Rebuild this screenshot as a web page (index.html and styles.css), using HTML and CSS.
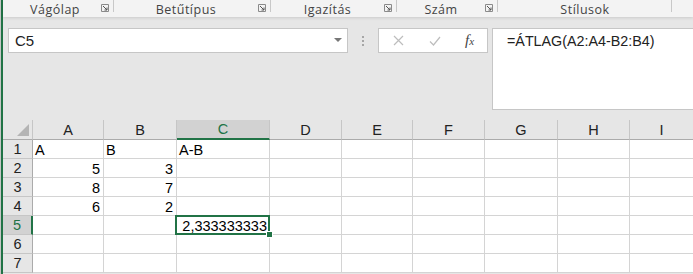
FILE: index.html
```html
<!DOCTYPE html>
<html lang="hu">
<head>
    <meta charset="UTF-8">
    <meta name="viewport" content="width=device-width, initial-scale=1.0">
    <title>Excel - ÁTLAG</title>
    <link rel="stylesheet" href="styles.css">
</head>
<body>
<div class="app">
    <div class="ribbon">
        <div class="group group-clip">
            <span class="group-label">Vágólap</span>
            <svg class="launcher" width="8" height="8" viewBox="0 0 8 8"><path d="M0.5 0.5h7v7h-7z" fill="none" stroke="#8a8a8a"/><path d="M2 2l4 4M3.5 6h2.5v-2.5" fill="none" stroke="#555"/></svg>
        </div>
        <div class="group group-font">
            <span class="group-label">Betűtípus</span>
            <svg class="launcher" width="8" height="8" viewBox="0 0 8 8"><path d="M0.5 0.5h7v7h-7z" fill="none" stroke="#8a8a8a"/><path d="M2 2l4 4M3.5 6h2.5v-2.5" fill="none" stroke="#555"/></svg>
        </div>
        <div class="group group-align">
            <span class="group-label">Igazítás</span>
            <svg class="launcher" width="8" height="8" viewBox="0 0 8 8"><path d="M0.5 0.5h7v7h-7z" fill="none" stroke="#8a8a8a"/><path d="M2 2l4 4M3.5 6h2.5v-2.5" fill="none" stroke="#555"/></svg>
        </div>
        <div class="group group-number">
            <span class="group-label">Szám</span>
            <svg class="launcher" width="8" height="8" viewBox="0 0 8 8"><path d="M0.5 0.5h7v7h-7z" fill="none" stroke="#8a8a8a"/><path d="M2 2l4 4M3.5 6h2.5v-2.5" fill="none" stroke="#555"/></svg>
        </div>
        <div class="group group-styles">
            <span class="group-label">Stílusok</span>
        </div>
        <div class="group group-rest"></div>
    </div>

    <div class="formula-area">
        <div class="name-box">
            <span>C5</span>
            <svg width="8" height="5" viewBox="0 0 8 5"><path d="M0 0h8l-4 4z" fill="#777"/></svg>
        </div>
        <div class="grip">
            <i></i><i></i><i></i>
        </div>
        <div class="fx-buttons">
            <svg width="11" height="11" viewBox="0 0 11 11"><path d="M1 1l9 9M10 1l-9 9" stroke="#bdbdbd" stroke-width="1.2"/></svg>
            <svg width="12" height="10" viewBox="0 0 12 10"><path d="M1 5.5l3.5 3.5l6.5-8" fill="none" stroke="#bdbdbd" stroke-width="1.2"/></svg>
            <span class="fx">f<sub>x</sub></span>
        </div>
        <div class="formula-box">=ÁTLAG(A2:A4-B2:B4)</div>
    </div>

    <div class="sheet">
        <div class="hd corner"><span class="tri"></span></div>
        <div class="hd col">A</div>
        <div class="hd col">B</div>
        <div class="hd col sel-col">C</div>
        <div class="hd col">D</div>
        <div class="hd col">E</div>
        <div class="hd col">F</div>
        <div class="hd col">G</div>
        <div class="hd col">H</div>
        <div class="hd col last">I</div>

        <div class="hd row">1</div>
        <div class="cell">A</div>
        <div class="cell">B</div>
        <div class="cell">A-B</div>
        <div class="cell"></div><div class="cell"></div><div class="cell"></div><div class="cell"></div><div class="cell"></div><div class="cell last"></div>

        <div class="hd row">2</div>
        <div class="cell num">5</div>
        <div class="cell num">3</div>
        <div class="cell"></div><div class="cell"></div><div class="cell"></div><div class="cell"></div><div class="cell"></div><div class="cell"></div><div class="cell last"></div>

        <div class="hd row">3</div>
        <div class="cell num">8</div>
        <div class="cell num">7</div>
        <div class="cell"></div><div class="cell"></div><div class="cell"></div><div class="cell"></div><div class="cell"></div><div class="cell"></div><div class="cell last"></div>

        <div class="hd row">4</div>
        <div class="cell num">6</div>
        <div class="cell num">2</div>
        <div class="cell"></div><div class="cell"></div><div class="cell"></div><div class="cell"></div><div class="cell"></div><div class="cell"></div><div class="cell last"></div>

        <div class="hd row sel-row">5</div>
        <div class="cell"></div>
        <div class="cell"></div>
        <div class="cell num active">2,333333333<span class="handle"></span></div>
        <div class="cell"></div><div class="cell"></div><div class="cell"></div><div class="cell"></div><div class="cell"></div><div class="cell last"></div>

        <div class="hd row">6</div>
        <div class="cell"></div><div class="cell"></div><div class="cell"></div><div class="cell"></div><div class="cell"></div><div class="cell"></div><div class="cell"></div><div class="cell"></div><div class="cell last"></div>

        <div class="hd row">7</div>
        <div class="cell"></div><div class="cell"></div><div class="cell"></div><div class="cell"></div><div class="cell"></div><div class="cell"></div><div class="cell"></div><div class="cell"></div><div class="cell last"></div>
    </div>
</div>
</body>
</html>
```

FILE: styles.css
```css
html, body {
    margin: 0;
    padding: 0;
    height: 274px;
    overflow: hidden;
    background-color: #c6c6c6;
}
.app {
    margin-left: 1px;
    border-left: 2px solid #217346;
    height: 274px;
    background-color: #e6e6e6;
    font-family: "Liberation Sans", Arial, sans-serif;
}

/* ribbon group labels */
.ribbon {
    display: flex;
    height: 17px;
    background-color: #f3f3f3;
    box-shadow: 0 1px 3px rgba(0,0,0,0.12);
    position: relative;
    z-index: 1;
}
.group {
    display: flex;
    align-items: flex-start;
    box-sizing: border-box;
    height: 17px;
    background: linear-gradient(#c8c8c8, #c8c8c8) no-repeat right top / 1px 12px;
}
.group-label {
    flex: 1;
    text-align: center;
    font-family: "Open Sans", "Noto Sans", sans-serif;
    font-size: 12.5px;
    line-height: 17px;
    padding-top: 1px;
    color: #444;
    letter-spacing: 0.5px;
}
.launcher {
    margin: 4px 5px 0 0;
}
.group-clip { width: 111px; padding-left: 6px; }
.group-font { width: 157px; }
.group-align { width: 126px; }
.group-number { width: 101px; }
.group-styles { width: 174px; }
.group-rest { flex: 1; background: none; }

/* formula bar */
.formula-area {
    display: flex;
    align-items: flex-start;
    height: 103px;
    padding-top: 11px;
    box-sizing: border-box;
}
.name-box {
    margin-left: 5px;
    width: 340px;
    height: 25px;
    box-sizing: border-box;
    background-color: white;
    border: 1px solid #c6c6c6;
    display: flex;
    align-items: center;
    justify-content: space-between;
    padding: 0 5px 0 6px;
    font-size: 15px;
    color: #222;
}
.grip {
    width: 30px;
    display: flex;
    flex-direction: column;
    align-items: center;
    gap: 2px;
    padding-top: 8px;
}
.grip i {
    width: 2px;
    height: 2px;
    background-color: #a6a6a6;
}
.fx-buttons {
    width: 110px;
    height: 25px;
    box-sizing: border-box;
    background-color: white;
    border: 1px solid #c6c6c6;
    display: flex;
    align-items: center;
    padding-left: 14px;
    gap: 25px;
}
.fx {
    font-family: "Liberation Serif", serif;
    font-style: italic;
    font-size: 15px;
    color: #444;
    margin-left: -1px;
}
.fx sub {
    font-size: 11px;
    vertical-align: 0;
}
.formula-box {
    margin-left: 4px;
    flex: 1;
    height: 82px;
    box-sizing: border-box;
    background-color: white;
    border: 1px solid #c6c6c6;
    border-right: none;
    padding: 3px 0 0 14px;
    font-size: 14.3px;
    line-height: 18px;
    color: #222;
}

/* worksheet grid */
.sheet {
    display: grid;
    grid-template-columns: 30px 71px 73px 93px 72px 71px 72px 73px 72px 1fr;
    grid-template-rows: 20px repeat(7, 19px);
    background-color: white;
    font-size: 14.5px;
    color: #000;
}
.sheet > div {
    box-sizing: border-box;
    border-right: 1px solid #d4d4d4;
    border-bottom: 1px solid #d4d4d4;
    line-height: 18px;
    white-space: nowrap;
    position: relative;
}
.sheet > .last {
    border-right: none;
}
.hd {
    background-color: #e6e6e6;
    text-align: center;
    color: #222;
}
.sheet > .col {
    border-right-color: #c6c6c6;
    border-bottom-color: #ababab;
    line-height: 20px;
}
.sheet > .row {
    border-right-color: #ababab;
    border-bottom-color: #c6c6c6;
}
.sheet > .corner {
    border-bottom-color: #ababab;
    border-right-color: #c6c6c6;
}
.tri {
    position: absolute;
    right: 3px;
    bottom: 3px;
    width: 0;
    height: 0;
    border-left: 12px solid transparent;
    border-bottom: 12px solid #b4b4b4;
}
.sheet > .sel-col {
    background-color: #d2d2d2;
    color: #217346;
    border-bottom: 2px solid #217346;
    line-height: 19px;
}
.sheet > .sel-row {
    background-color: #d2d2d2;
    color: #217346;
    border-right: 2px solid #217346;
}
.cell {
    padding: 1px 2px 0;
}
.num {
    text-align: right;
    padding-right: 3px;
}
.sheet > .active {
    overflow: visible;
    z-index: 2;
    padding-right: 2px;
}
.active::after {
    content: "";
    position: absolute;
    top: -1px;
    left: -2px;
    right: -1px;
    bottom: -1px;
    border: 2px solid #217346;
}
.handle {
    position: absolute;
    right: -4px;
    bottom: -4px;
    width: 5px;
    height: 5px;
    background-color: #217346;
    border: 1px solid white;
    z-index: 3;
}
```
